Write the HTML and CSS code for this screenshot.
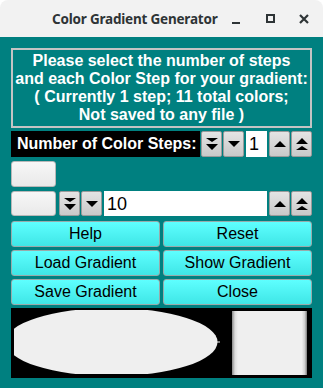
FILE: index.html
```html
<!DOCTYPE html>
<html lang="en">

<head>
    <meta charset="UTF-8">
    <title>Color Gradient Generator</title>
    <link rel="stylesheet" href="styles.css">
</head>

<body>
    <div class="window">
        <header class="titlebar">
            <span class="title">Color Gradient Generator</span>
            <div class="win-buttons">
                <span class="win-btn win-min"></span>
                <span class="win-btn win-max"></span>
                <span class="win-btn win-close">
                    <svg width="12" height="12" viewBox="0 0 12 12">
                        <path d="M2 2 L10 10 M10 2 L2 10" stroke="#2e3436" stroke-width="2.2" />
                    </svg>
                </span>
            </div>
        </header>

        <main class="content">
            <div class="info">
                Please select the number of steps<br>
                and each Color Step for your gradient:<br>
                ( Currently 1 step; 11 total colors;<br>
                Not saved to any file )
            </div>

            <div class="steps-row">
                <div class="steps-label">Number of Color Steps:</div>
                <div class="spinner">
                    <button class="spin-btn">
                        <svg width="14" height="14" viewBox="0 0 14 14"><path d="M1 1 H13 L7 5 Z M1 7 H13 L7 13 Z" /></svg>
                    </button>
                    <button class="spin-btn">
                        <svg width="14" height="14" viewBox="0 0 14 14"><path d="M1 4 H13 L7 10 Z" /></svg>
                    </button>
                    <div class="spin-field small">1</div>
                    <button class="spin-btn">
                        <svg width="14" height="14" viewBox="0 0 14 14"><path d="M1 10 H13 L7 4 Z" /></svg>
                    </button>
                    <button class="spin-btn">
                        <svg width="14" height="14" viewBox="0 0 14 14"><path d="M1 7 H13 L7 1 Z M1 13 H13 L7 9 Z" /></svg>
                    </button>
                </div>
            </div>

            <div class="swatch-row">
                <div class="swatch"></div>
            </div>

            <div class="swatch-row">
                <div class="swatch"></div>
                <div class="spinner wide">
                    <button class="spin-btn">
                        <svg width="14" height="14" viewBox="0 0 14 14"><path d="M1 1 H13 L7 5 Z M1 7 H13 L7 13 Z" /></svg>
                    </button>
                    <button class="spin-btn">
                        <svg width="14" height="14" viewBox="0 0 14 14"><path d="M1 4 H13 L7 10 Z" /></svg>
                    </button>
                    <div class="spin-field">10</div>
                    <button class="spin-btn">
                        <svg width="14" height="14" viewBox="0 0 14 14"><path d="M1 10 H13 L7 4 Z" /></svg>
                    </button>
                    <button class="spin-btn">
                        <svg width="14" height="14" viewBox="0 0 14 14"><path d="M1 7 H13 L7 1 Z M1 13 H13 L7 9 Z" /></svg>
                    </button>
                </div>
            </div>

            <div class="actions">
                <button class="action">Help</button>
                <button class="action">Reset</button>
                <button class="action">Load Gradient</button>
                <button class="action">Show Gradient</button>
                <button class="action">Save Gradient</button>
                <button class="action">Close</button>
            </div>

            <div class="preview">
                <svg width="301" height="70" viewBox="0 0 301 70">
                    <defs>
                        <clipPath id="clip">
                            <rect x="3" y="2" width="215" height="64" />
                        </clipPath>
                        <linearGradient id="edge" x1="0" x2="1" y1="0" y2="0">
                            <stop offset="0" stop-color="#8a8a8a" />
                            <stop offset="0.04" stop-color="#dcdcdc" />
                            <stop offset="0.08" stop-color="#efefef" />
                            <stop offset="0.93" stop-color="#efefef" />
                            <stop offset="0.97" stop-color="#cfcfcf" />
                            <stop offset="1" stop-color="#7a7a7a" />
                        </linearGradient>
                    </defs>
                    <ellipse cx="100.5" cy="34" rx="106" ry="34" fill="#efefef" clip-path="url(#clip)" />
                    <rect x="205" y="33.5" width="4" height="1" fill="#efefef" />
                    <rect x="221" y="3" width="75" height="64" fill="url(#edge)" />
                </svg>
            </div>
        </main>
    </div>
</body>

</html>
```

FILE: styles.css
```css
body {
    margin: 0;
    background-color: #ffffff;
    font-family: "Liberation Sans", Arial, sans-serif;
}

.window {
    width: 323px;
    height: 388px;
    display: flex;
    flex-direction: column;
    overflow: hidden;
}

.titlebar {
    height: 37px;
    flex: none;
    display: flex;
    align-items: center;
    background-color: #f2f2f2;
    border-radius: 8px 8px 0 0;
}

.title {
    flex: none;
    margin-left: 52px;
    white-space: nowrap;
    font-family: "Noto Sans", "DejaVu Sans", sans-serif;
    font-size: 13.5px;
    font-weight: bold;
    color: #2e3436;
    letter-spacing: -0.2px;
}

.win-buttons {
    display: flex;
    align-items: center;
    margin-left: auto;
}

.win-btn {
    display: flex;
    align-items: center;
    justify-content: center;
    width: 34px;
    height: 24px;
}

.win-min::before {
    content: "";
    width: 8px;
    height: 2px;
    margin-top: 8px;
    background-color: #2e3436;
}

.win-max::before {
    content: "";
    width: 5px;
    height: 5px;
    border: 2px solid #2e3436;
}

.win-close {
    margin-right: 2px;
}

.content {
    flex: 1;
    background-color: #008080;
    padding: 11px 11px 0 11px;
}

.info {
    border: 2px solid #c4c4c4;
    padding-top: 2px;
    box-sizing: border-box;
    height: 80px;
    color: #ffffff;
    font-weight: bold;
    font-size: 16px;
    line-height: 18px;
    text-align: center;
}

.steps-row {
    display: flex;
    margin-top: 3px;
    height: 26px;
}

.steps-label {
    width: 191px;
    background-color: #000000;
    color: #ffffff;
    font-weight: bold;
    font-size: 16px;
    line-height: 26px;
    padding-left: 6px;
    box-sizing: border-box;
}

.spinner {
    display: flex;
    flex: 1;
    gap: 1px;
    margin-left: 1px;
}

.spinner.wide {
    margin-left: 3px;
}

.spin-btn {
    width: 21px;
    padding: 0;
    border: 1px solid #9a9a9a;
    border-radius: 2px;
    background: linear-gradient(#e4e4e4, #c9c9c9);
    display: flex;
    align-items: center;
    justify-content: center;
}

.spin-btn svg {
    fill: #000000;
}

.spin-field {
    flex: 1;
    background-color: #ffffff;
    font-size: 18px;
    line-height: 26px;
    padding-left: 3px;
    margin: 0 1px;
}

.spin-field.small {
    flex: none;
    width: 18px;
}

.swatch-row {
    display: flex;
    margin-top: 4px;
    height: 26px;
}

.swatch-row + .swatch-row {
    height: 25px;
}

.swatch {
    width: 45px;
    flex: none;
    border: 1px solid #b8b8b8;
    border-radius: 3px;
    box-sizing: border-box;
    background: linear-gradient(#f7f7f7, #e9e9e9);
}

.actions {
    display: grid;
    grid-template-columns: 149px 149px;
    grid-auto-rows: 26px;
    column-gap: 3px;
    row-gap: 3px;
    margin-top: 5px;
}

.action {
    border: 1px solid #9aa;
    border-radius: 3px;
    background: linear-gradient(#5effff, #3fe6e6);
    font-family: "Liberation Sans", Arial, sans-serif;
    font-size: 16px;
    color: #000000;
    padding: 0;
}

.preview {
    margin-top: 3px;
    height: 70px;
    background-color: #000000;
}

.preview svg {
    display: block;
}
```
